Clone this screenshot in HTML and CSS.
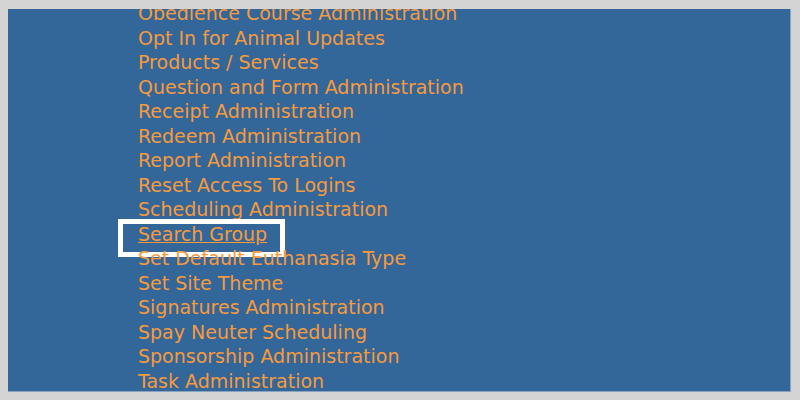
FILE: index.html
```html
<!DOCTYPE html>
<html lang="en">
<head>
    <meta charset="UTF-8">
    <title>Administration</title>
    <link rel="stylesheet" href="styles.css">
</head>
<body>
    <div class="panel">
        <ul class="menu">
            <li><a href="#">Obedience Course Administration</a></li>
            <li><a href="#">Opt In for Animal Updates</a></li>
            <li><a href="#">Products / Services</a></li>
            <li><a href="#">Question and Form Administration</a></li>
            <li><a href="#">Receipt Administration</a></li>
            <li><a href="#">Redeem Administration</a></li>
            <li><a href="#">Report Administration</a></li>
            <li><a href="#">Reset Access To Logins</a></li>
            <li><a href="#">Scheduling Administration</a></li>
            <li><a href="#" class="current">Search Group</a></li>
            <li><a href="#">Set Default Euthanasia Type</a></li>
            <li><a href="#">Set Site Theme</a></li>
            <li><a href="#">Signatures Administration</a></li>
            <li><a href="#">Spay Neuter Scheduling</a></li>
            <li><a href="#">Sponsorship Administration</a></li>
            <li><a href="#">Task Administration</a></li>
        </ul>
    </div>
</body>
</html>
```

FILE: styles.css
```css
html, body {
    margin: 0;
    height: 100%;
}
body {
    background-color: #d4d4d4;
    padding: 9px 9px 8px 8px;
    box-sizing: border-box;
    font-family: "DejaVu Sans", sans-serif;
}
.panel {
    height: 100%;
    background-color: #336699;
    border-right: 1px solid #88a4c2;
    border-bottom: 1px solid #88a4c2;
    box-sizing: border-box;
    overflow: hidden;
}
.menu {
    list-style: none;
    margin: -7.8px 0 0 0;
    padding: 0 0 0 130px;
    font-size: 19px;
    line-height: 24.5px;
}
.menu a {
    color: #f79a3c;
    text-decoration: none;
}
/* highlighted row: white focus frame, kept out of the flow */
.menu a.current {
    display: inline-block;
    text-decoration: underline;
    padding: 0 15px 8px 17px;
    margin: 0 -15px -8px -17px;
    outline: 5px solid #fff;
    outline-offset: -2px;
}
```
